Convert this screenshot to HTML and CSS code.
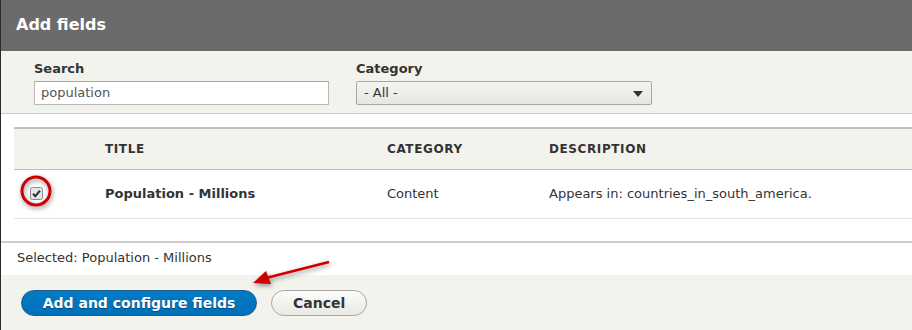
FILE: index.html
```html
<!DOCTYPE html>
<html lang="en">
<head>
	<meta charset="UTF-8">
	<title>Add fields</title>
	<link rel="stylesheet" href="styles.css">
</head>
<body>
	<div class="dialog">
		<div class="dialog-title">Add fields</div>

		<div class="filters">
			<div class="filter filter-search">
				<label>Search</label>
				<div class="input">population</div>
			</div>
			<div class="filter filter-category">
				<label>Category</label>
				<div class="select">- All -<span class="caret"></span></div>
			</div>
		</div>

		<div class="results">
			<table class="fields">
				<thead>
					<tr><th class="col-check"></th><th class="col-title">Title</th><th class="col-cat">Category</th><th>Description</th></tr>
				</thead>
				<tbody>
					<tr>
						<td class="col-check">
							<svg class="checkbox" width="13" height="13" viewBox="0 0 13 13">
								<rect x="0.5" y="0.5" width="12" height="12" rx="2" fill="#e6e6e6" stroke="#8c8c8c"/>
								<path d="M3 6.8 L5.3 9.2 L10 3.6" fill="none" stroke="#333" stroke-width="2"/>
							</svg>
						</td>
						<td class="col-title"><strong>Population - Millions</strong></td>
						<td class="col-cat">Content</td>
						<td>Appears in: countries_in_south_america.</td>
					</tr>
				</tbody>
			</table>
		</div>

		<div class="selected">Selected: Population - Millions</div>

		<div class="actions">
			<button class="button button-primary">Add and configure fields</button>
			<button class="button">Cancel</button>
		</div>
	</div>

	<!-- annotation drawn over the screenshot -->
	<svg class="annotation" width="912" height="330" viewBox="0 0 912 330">
		<defs>
			<filter id="shade" x="-50%" y="-50%" width="200%" height="200%">
				<feGaussianBlur in="SourceAlpha" stdDeviation="2.5"/>
				<feOffset dx="1" dy="2"/>
				<feComponentTransfer><feFuncA type="linear" slope="0.45"/></feComponentTransfer>
				<feMerge><feMergeNode/><feMergeNode in="SourceGraphic"/></feMerge>
			</filter>
		</defs>
		<g filter="url(#shade)">
			<circle cx="36" cy="191" r="14" fill="none" stroke="#cc0000" stroke-width="3"/>
			<line x1="329" y1="262" x2="266" y2="278" stroke="#cc0000" stroke-width="2.5"/>
			<polygon points="253,283 266,271 271,284" fill="#cc0000"/>
		</g>
	</svg>
</body>
</html>
```

FILE: styles.css
```css
body{margin:0;background:#2b2b2b;font-family:"DejaVu Sans",Verdana,sans-serif;font-size:13px;color:#333;position:relative;width:912px;height:330px;overflow:hidden;}

.dialog{margin-left:1px;background:#fff;height:330px;display:flex;flex-direction:column;}

.dialog-title{height:51px;box-sizing:border-box;padding:14px 15px 0;background:#6b6b6b;color:#fff;font-weight:bold;font-size:16px;line-height:22px;}

.filters{display:flex;gap:27px;padding:10px 0 0 33px;height:63px;box-sizing:border-box;background:#f3f3ee;border-bottom:1px solid #ccc;}
.filter label{display:block;font-weight:bold;font-size:13px;line-height:16px;margin-bottom:4px;}
.input{width:295px;height:24px;box-sizing:border-box;border:1px solid #b8b8b8;border-top-color:#a8a8a8;background:#fff;padding:0 6px;line-height:22px;color:#555;}
.select{position:relative;width:296px;height:24px;box-sizing:border-box;border:1px solid #a6a6a6;border-radius:2px;background:linear-gradient(#f4f4f1,#e6e6e1);padding:0 7px;line-height:22px;color:#333;}
.caret{position:absolute;right:8px;top:9px;border-left:5px solid transparent;border-right:5px solid transparent;border-top:6px solid #333;}

.results{padding:13px 0 22px 13px;}
.fields{width:100%;border-collapse:collapse;}
.fields th{height:41px;box-sizing:border-box;background:#f3f3ee;border-top:2px solid #bfbfbf;border-bottom:1px solid #bfbfbf;text-align:left;text-transform:uppercase;font-size:12px;letter-spacing:0.6px;font-weight:bold;color:#333;padding:0;}
.fields td{height:49px;box-sizing:border-box;border-bottom:1px solid #e2e2dc;padding:0;color:#333;}
.fields .col-check{width:91px;padding-left:16px;box-sizing:border-box;}
.fields .col-title{width:282px;}
.fields .col-cat{width:162px;}
.checkbox{display:block;margin-top:0;}

.selected{border-top:2px solid #ccc;padding:7px 16px 0;height:34px;box-sizing:border-box;line-height:16px;}

.actions{flex:1;background:#f3f3ee;padding:15px 0 0 20px;display:flex;gap:14px;align-items:flex-start;}
.button{font-family:inherit;font-size:14px;font-weight:bold;height:26px;border-radius:13px;padding:0 21px;border:1px solid #a6a6a6;background:linear-gradient(#fcfcfa,#e8e8e4);color:#333;line-height:22px;white-space:nowrap;}
.button-primary{width:236px;padding:0;border-color:#1e5c90;background:linear-gradient(#007bc6,#0071b8);color:#fff;text-shadow:0 1px 1px rgba(0,0,0,0.4);}

.annotation{position:absolute;left:0;top:0;pointer-events:none;}
```
